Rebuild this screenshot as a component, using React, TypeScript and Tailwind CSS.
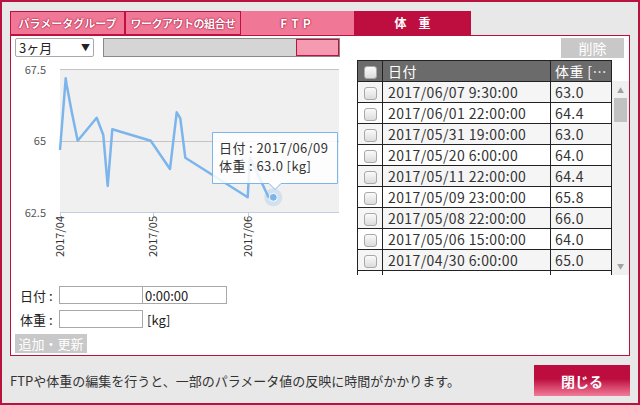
import React from "react";

const rows = [
  ["2017/06/07 9:30:00", "63.0"],
  ["2017/06/01 22:00:00", "64.4"],
  ["2017/05/31 19:00:00", "63.0"],
  ["2017/05/20 6:00:00", "64.0"],
  ["2017/05/11 22:00:00", "64.4"],
  ["2017/05/09 23:00:00", "65.8"],
  ["2017/05/08 22:00:00", "66.0"],
  ["2017/05/06 15:00:00", "64.0"],
  ["2017/04/30 6:00:00", "65.0"],
];

const pts: [number, number][] = [
  [49, 90], [54.7, 18.3], [55.7, 25], [60.7, 51.7], [66.7, 80.7], [85.7, 57.7],
  [92.3, 75], [96.7, 126], [101.3, 69.3], [139.7, 80.7], [159, 109], [165.7, 52.3],
  [169.3, 58.3], [174.3, 97.7], [236.7, 137.3], [239, 97.3], [257.3, 136.7], [262.3, 137.3],
];

function Box() {
  return <span className="inline-block w-[13px] h-[13px] rounded-[3px] border border-[#a9a9a9] bg-gradient-to-b from-[#fafafa] to-[#dcdcdc] align-middle" />;
}

function Chart() {
  const d = pts.map((p, i) => `${i ? "L" : "M"}${p[0]} ${p[1]}`).join(" ");
  return (
    <svg width="340" height="210" className="block" fontFamily="'Noto Sans CJK JP', sans-serif">
      <rect x="49" y="9" width="279" height="143" fill="#f0f0f0" />
      <line x1="49" x2="328" y1="9.5" y2="9.5" stroke="#c4c4c4" />
      <line x1="49" x2="328" y1="81.5" y2="81.5" stroke="#c4c4c4" />
      <line x1="49" x2="328" y1="152.5" y2="152.5" stroke="#c0d0e0" />
      {[49.5, 142.5, 237.5].map((x) => (
        <line key={x} x1={x} x2={x} y1="152" y2="157" stroke="#c0d0e0" />
      ))}
      <text x="35" y="14" fontSize="11" fill="#555" textAnchor="end">67.5</text>
      <text x="35" y="85" fontSize="11" fill="#555" textAnchor="end">65</text>
      <text x="35" y="157" fontSize="11" fill="#555" textAnchor="end">62.5</text>
      {[["2017/04", 53], ["2017/05", 146], ["2017/06", 241]].map(([t, x]) => (
        <text key={t} x={x} y="156" fontSize="11" fill="#333" textAnchor="end" transform={`rotate(-90 ${x} 156)`}>{t}</text>
      ))}
      <path d={d} fill="none" stroke="#7cb5ec" strokeWidth="2.5" strokeLinejoin="round" />
      <circle cx="262.3" cy="137.3" r="9" fill="#7cb5ec" opacity="0.25" />
      <circle cx="262.3" cy="137.3" r="4" fill="#7cb5ec" stroke="#fff" strokeWidth="1" />
      <path d="M201.5 72.5 H326.5 V123.5 H270 L264 129.5 L258 123.5 H201.5 Z" fill="#fff" fillOpacity="0.85" stroke="#7cb5ec" />
      <text x="208" y="93" fontSize="13" letterSpacing="0.4" fill="#333">日付 : 2017/06/09</text>
      <text x="208" y="111" fontSize="13" letterSpacing="0.4" fill="#333">体重 : 63.0 [kg]</text>
    </svg>
  );
}

export default function App() {
  return (
    <div lang="ja" className="w-[640px] h-[405px] bg-[#e8e8e8] border-2 border-[#b8123f] pl-[8px] pt-[9px] [font-family:'Noto_Sans_CJK_JP',sans-serif] text-[#333]">
      <div className="flex h-[24px] text-white font-bold text-[11px] leading-none whitespace-nowrap [text-shadow:0_0_2px_#a3002e,0_0_1px_#a3002e]">
        <div className="w-[115px] flex items-center justify-center bg-[#f07896] border border-[#c0103f]">パラメータグループ</div>
        <div className="w-[116px] flex items-center justify-center bg-[#f07896] border border-[#c0103f] tracking-[-0.5px]">ワークアウトの組合せ</div>
        <div className="w-[113px] flex items-center justify-center bg-[#f07896] text-[12px] tracking-[4px]">FTP</div>
        <div className="w-[117px] flex items-center justify-center bg-[#bd0e3f] text-[12px] [text-shadow:none]">体　重</div>
      </div>

      <div className="w-[620px] h-[321px] bg-white border border-[#b8123f] flex">
        <div className="w-[340px] flex flex-col pt-[2px]">
          <div className="flex items-center h-[19px] pl-[4px]">
            <div className="w-[79px] h-[19px] border border-[#a8a8a8] rounded-[2px] flex items-center justify-between px-[3px] text-[13px] leading-none text-[#222]">
              <span>3ヶ月</span>
              <span className="text-[9px]">▼</span>
            </div>
            <div className="ml-[9px] w-[237px] h-[19px] bg-[#d5d5d5] border border-[#888] flex justify-end">
              <div className="w-[43px] h-full bg-[#f59ab0] border border-[#c0103f]" />
            </div>
          </div>
          <div className="mt-[3px]">
            <Chart />
          </div>
          <div className="mt-[16px] pl-[9px] flex flex-col gap-[6px] text-[13px] leading-none text-[#222]">
            <div className="flex items-center h-[18px]">
              <span className="w-[39px]">日付 :</span>
              <div className="w-[84px] h-[18px] border border-[#a8a8a8]" />
              <div className="w-[84px] h-[18px] border border-[#a8a8a8] border-l-0 flex items-center pl-[2px]">0:00:00</div>
            </div>
            <div className="flex items-center h-[18px]">
              <span className="w-[39px]">体重 :</span>
              <div className="w-[84px] h-[18px] border border-[#a8a8a8]" />
              <span className="ml-[4px]">[kg]</span>
            </div>
          </div>
          <div className="mt-[6px] ml-[4px] w-[72px] h-[19px] bg-[#c8c8c8] text-white text-[13px] leading-none flex items-center justify-center">追加・更新</div>
        </div>

        <div className="ml-[6px] flex flex-col pt-[2px]">
          <div className="flex justify-end pr-[5px]">
            <div className="w-[63px] h-[20px] bg-[#c8c8c8] text-white text-[14px] leading-none flex items-center justify-center">削除</div>
          </div>
          <div className="flex mt-[2px]">
            <div className="w-[255px] h-[215px] overflow-hidden">
              <table className="border-collapse table-fixed text-[14px] leading-none tracking-[0.4px]">
                <colgroup>
                  <col className="w-[25px]" />
                  <col className="w-[168px]" />
                  <col className="w-[61px]" />
                </colgroup>
                <thead>
                  <tr className="h-[21px] bg-[#6b6b6b] text-white">
                    <th className="border border-[#222] text-center"><Box /></th>
                    <th className="border border-[#222] text-left font-normal pl-[5px]">日付</th>
                    <th className="border border-[#222] text-left font-normal pl-[4px] whitespace-nowrap overflow-hidden">体重 […</th>
                  </tr>
                </thead>
                <tbody>
                  {rows.map(([date, w], i) => (
                    <tr key={i} className={`h-[21px] ${i % 2 === 0 ? "bg-[#f5f5f5]" : "bg-white"} text-[#333]`}>
                      <td className="border border-[#222] text-center"><Box /></td>
                      <td className="border border-[#222] pl-[5px] whitespace-nowrap">{date}</td>
                      <td className="border border-[#222] pl-[4px]">{w}</td>
                    </tr>
                  ))}
                  <tr className="h-[21px] bg-white">
                    <td className="border border-[#222] text-center"><Box /></td>
                    <td className="border border-[#222]" />
                    <td className="border border-[#222]" />
                  </tr>
                </tbody>
              </table>
            </div>
            <div className="mt-[21px] w-[17px] h-[194px] bg-[#f0f0f0] flex flex-col items-center text-[#a0a0a0] text-[7px] leading-none">
              <span className="mt-[6px]">▲</span>
              <div className="mt-[4px] w-[13px] h-[24px] bg-[#c1c1c1]" />
              <span className="mt-auto mb-[5px]">▼</span>
            </div>
          </div>
        </div>
      </div>

      <div className="w-[620px] mt-[9px] flex items-center justify-between">
        <span className="text-[13px] leading-none text-[#333]">FTPや体重の編集を行うと、一部のパラメータ値の反映に時間がかかります。</span>
        <div className="w-[96px] h-[31px] bg-[linear-gradient(#bd0d3f_0%,#bd0d3f_45%,#f27c9a_100%)] text-white font-bold text-[14px] leading-none flex items-center justify-center">閉じる</div>
      </div>
    </div>
  );
}
